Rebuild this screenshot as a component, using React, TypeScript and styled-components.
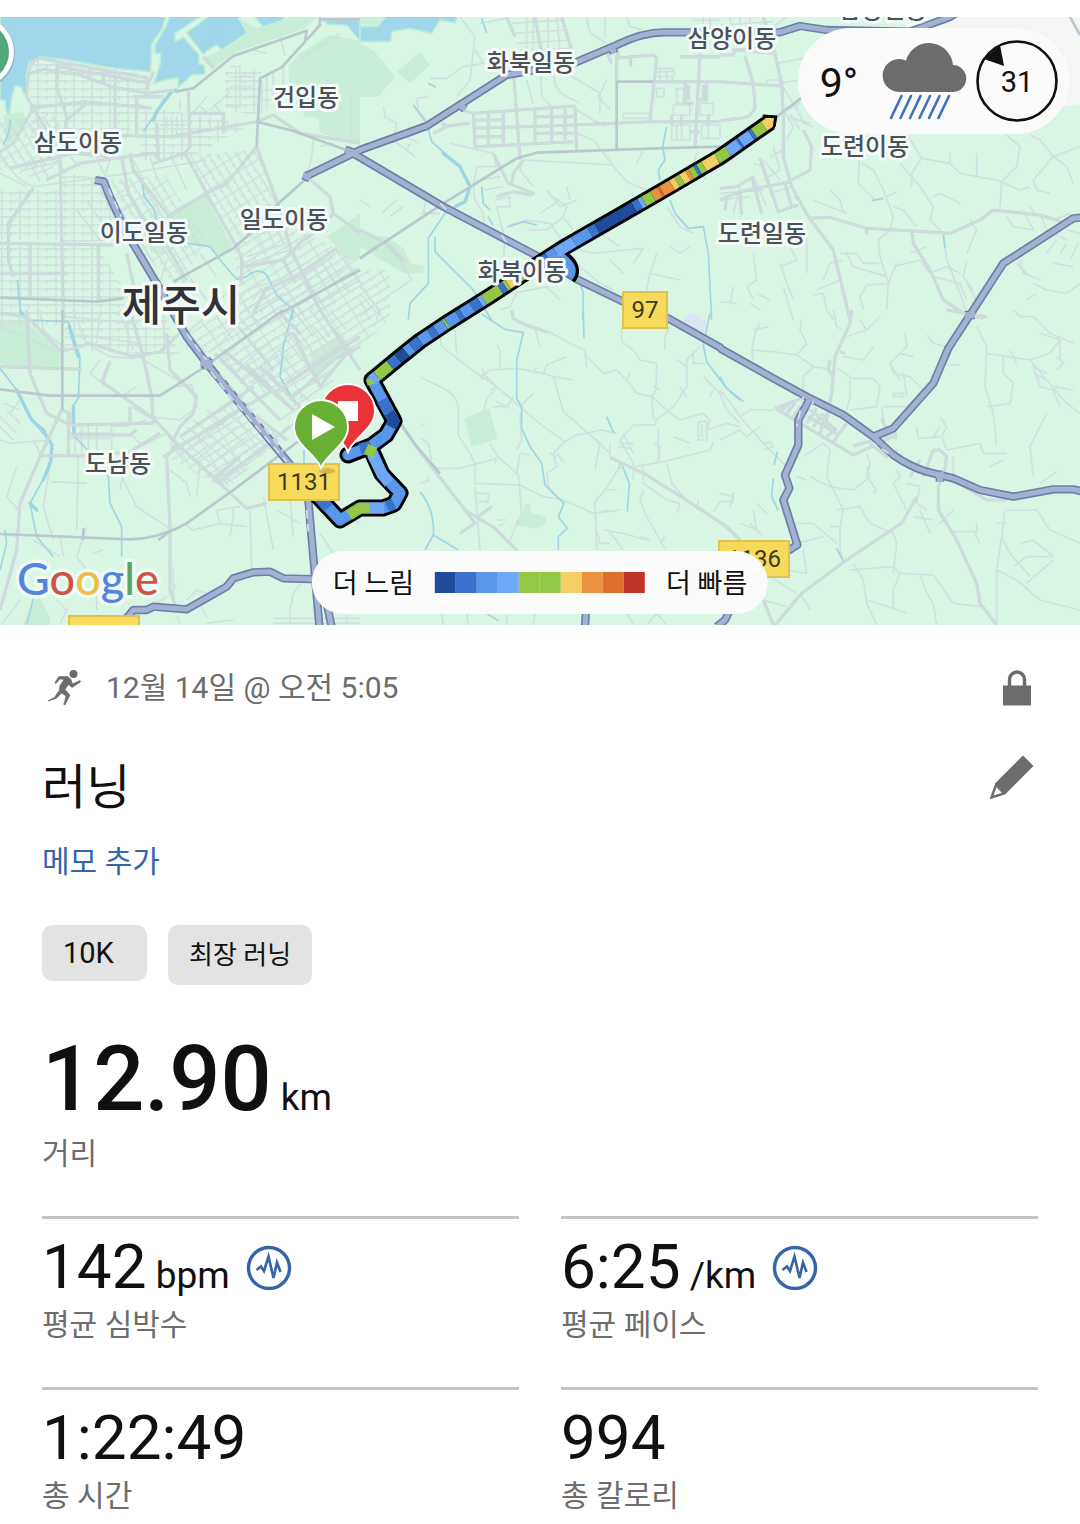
import React from "react";
import styled, { createGlobalStyle } from "styled-components";

const GlobalStyle = createGlobalStyle`
  *, *::before, *::after { box-sizing: border-box; }
  body {
    margin: 0;
    background: #ffffff;
    color: #101010;
    font-family: Roboto, "Noto Sans CJK KR", sans-serif;
  }
`;

/* ---------- map data ---------- */

type Tile = { x: number; y: number; paths: string[] };

// Each tile is drawn on a 3x grid with its own origin.
const waters: Tile[] = [
  {
    x: 0,
    y: 0,
    paths: [
      "M0 40H500L485 90L455 130L452 215L345 205L190 178L120 170L88 185L78 225L82 282L70 280L66 262L45 258L35 290L28 350L18 330L15 300H0Z",
      "M512 40L500 75L466 135L466 160L483 160L480 195L462 250L500 238L535 235L535 262L575 225L615 222L612 195L595 192L597 165L550 112L525 125L525 100L615 40Z",
      "M640 40L560 98L608 160L650 135L672 155L740 98L712 40Z",
      "M755 40H870L842 62L790 80Z",
      "M975 62L1020 56L1080 56V122L1040 75L980 72Z",
    ],
  },
  { x: 360, y: 0, paths: ["M0 80L55 78L80 40H295L285 68L240 60L215 100L150 85L95 95L92 124H0Z"] },
];

const parks: Tile[] = [
  {
    x: 0,
    y: 0,
    paths: [
      "M712 52L770 85L842 62L870 52H950L910 88L710 155L640 205L612 175L660 150L740 98Z",
      "M1080 122L990 105L900 160L865 200L870 260L915 350L955 355L960 400L1080 432Z",
      "M505 645L615 582L700 745L655 765L628 738L570 728L550 690Z",
      "M980 710L1080 640V775L1045 782L1010 740Z",
      "M445 730L500 738L492 765L452 755Z",
      "M10 345L70 335L75 360L20 440Z",
    ],
  },
  { x: 360, y: 0, paths: ["M0 130L40 150L105 230L55 290H0Z", "M110 215L180 155L210 195L150 250Z", "M0 700L80 710L130 745L150 790L195 800L185 820L130 820L0 740Z", "M0 52H80L50 80L0 70Z"] },
  { x: 0, y: 310, paths: ["M0 35H80L185 130V170H30L0 160Z", "M930 130L1010 80L1045 120L960 180L945 220Z", "M120 865L150 920V945H70L100 870Z"] },
  { x: 420, y: 310, paths: ["M133 325L208 295L232 388L155 410Z", "M312 585L330 580L335 610L378 620V640L350 656L285 645L290 630L308 622Z"] },
];

const rivers: Tile[] = [
  {
    x: 0,
    y: 0,
    paths: ["M530 265L490 300L465 345L430 395", "M428 550L432 590L460 625L470 660", "M565 730L630 740L665 785L710 838L740 830Q775 800 800 825L830 885L880 930L875 960", "M52 840L62 940L80 960", "M32 360L25 400L10 435", "M670 55L610 160"],
  },
  { x: 360, y: 0, paths: ["M160 315L200 370L215 425L300 500L330 555L320 600L255 640L205 715L205 850L150 910L145 960", "M225 710L225 755L290 820L340 870L395 960", "M365 55L380 100", "M205 250L228 262", "M365 560L370 610L390 630M385 650L398 675M445 680L490 665L530 675", "M920 380L908 440L915 480L895 510L900 540M930 600L945 640L985 685L1030 680L1045 760L1055 960", "M640 780L670 880L668 960"] },
  { x: 720, y: 0, paths: ["M455 602L490 595", "M670 705L675 745"] },
  {
    x: 0,
    y: 310,
    paths: ["M60 0L85 30L205 35L240 140L235 265L218 290L220 375L262 420L325 500L330 580L365 650L365 740", "M0 175L50 240L95 330L155 400L150 470L90 580L110 680L160 740", "M15 660L20 700L0 780", "M100 865L80 945", "M878 0L850 110L840 200L885 280", "M912 420V460"],
  },
  { x: 420, y: 310, paths: ["M185 12L255 58L310 68L290 150L290 265L305 290L305 355L330 410L365 460L375 525L432 580L415 620L442 655L415 680V720", "M0 545Q45 600 40 675L15 720M40 675L115 720", "M490 0L492 85", "M870 10L850 105L860 155L920 235L960 270", "M608 470L628 520L622 605", "M560 320L582 370", "M200 910L235 932"] },
  { x: 720, y: 310, paths: ["M0 200L20 235L70 275", "M172 425L162 465M160 505L155 560L175 602", "M350 715L370 755"] },
];

const wideRivers: Tile[] = [
  { x: 0, y: 0, paths: ["M512 278L470 335L460 360"] },
  { x: 360, y: 0, paths: ["M250 460L300 500L330 560L315 605L285 620"] },
  { x: 0, y: 310, paths: ["M50 240L95 330L130 360L156 405L152 455L130 510M208 50L235 140M220 290L222 370M90 580L110 600"] },
];

const lanes: Tile[] = [
  {
    x: 0,
    y: 0,
    paths: [
      "M0 470L60 540L100 560M0 520L80 560M20 690L90 570M100 560L390 520L620 480",
      "M75 510L150 490M85 530L160 500M120 490L150 540M90 490L120 545M60 520L100 480",
      "M160 470L200 520M210 470L240 500M290 470L310 520M330 480L310 540",
      "M400 480L430 540M450 470L470 530M510 460L560 570M540 300V330M620 290L570 350",
      "M630 330L690 275M600 320L630 345M640 310L670 345V400M690 200H720V320H680M690 230H760M690 260H760M680 290H770",
      "M785 240V340M800 220V330M820 210V300M850 200V280M780 270H860M780 300H850",
      "M760 150L800 160M840 110L855 165M900 180L960 140L1020 100",
      "M1055 290V430M1000 430L960 440M940 420L935 470L920 530",
      "M500 350V400M515 350V405M530 350V405M480 375H560M600 350V390M630 350V385",
      "M500 780L480 850M560 750L530 690L500 640M600 760L650 830M560 820L620 900M700 860L660 900M780 870L760 900",
      "M690 930L740 870L860 830M640 960L720 900M760 930L850 880",
      "M900 830L960 930M940 800L1000 900M985 780L1050 880M1010 750L1080 850M860 900L900 960M1000 770L880 850M1050 800L920 890M1080 840L960 910",
      "M740 770L860 730M750 790L870 750M760 680L800 760M790 660L830 750M820 660L850 730",
      "M430 580L470 640L510 700M300 560L340 640M260 600L320 690M230 630L300 720M340 600L390 580M350 640L410 610",
    ],
  },
  {
    x: 360,
    y: 0,
    paths: [
      "M300 51L345 110L330 240L290 290M210 235L260 235L310 200L370 190L345 150M360 70L440 55M460 100L620 90M470 130L630 120M500 51V150M520 51V160M565 51V150M590 51L600 150M455 70L610 60M480 150L640 145",
      "M540 180L545 290L575 320M500 240L520 310M585 200Q570 260 620 290L660 310M620 220L720 280L720 340M740 240L715 290L750 330M680 51L690 100L740 130M735 51V110M800 51L810 80L850 90",
      "M205 290L170 295L175 335L200 360M70 320L75 350L110 370L100 420L165 470M110 400L180 430M150 430L140 450M65 640L110 600M90 650L130 620M180 640L240 640M0 600L30 620M200 590L190 640",
      "M270 430L400 460L410 500L350 500L340 560M360 540L420 530M370 570L430 560M340 560L345 600L370 640L375 700M405 600L450 590L450 620L410 620L435 720L430 780",
      "M490 480L680 490L760 495M490 480L480 510L520 560M540 640L600 600M560 570L600 620L650 600M620 560L630 600M580 590L620 620M620 620L610 650L640 690M500 690L560 690L610 650M440 680L500 660L570 670L620 740L700 760L850 745",
      "M650 330L700 360L740 380M650 400L700 420L770 510L800 545L860 570M850 450L830 490M720 700L780 740M850 745L820 790M750 780L790 820M890 760L870 820L960 840M870 820L860 870M990 740L960 760L930 740M920 620L960 680L1000 700",
      "M0 860L60 930L50 960M0 880L50 940M0 900L30 960M75 730L100 760L120 780L155 840L50 910L0 950M120 780L150 780",
      "M600 900L560 860L460 880M640 780L660 800L720 850L760 870M470 880L450 920L420 930",
      "M890 205H940Q950 240 920 245H885M885 215H940M885 230H940M900 205V245M920 205V245M890 265H912V290H890ZM950 265H970V310H950Z",
      "M940 315H990V345H940ZM935 375H990V420H935ZM950 375V420M965 375V420M1020 310H1060V345H1020ZM1025 375H1080V415H1025ZM1045 375V415M790 340H870V355H790Z",
      "M1010 460L1000 500L1040 540M1030 51V90M1050 51V90M1000 60H1080",
    ],
  },
  {
    x: 720,
    y: 0,
    paths: [
      "M30 51L40 130M60 51L65 120M90 51V100M0 75L160 65M0 150L160 140M160 80L200 51",
      "M170 190L250 175M175 250L240 240M140 250V240H180M180 245L230 330M180 340L240 310M200 350L270 370M190 330L220 380L200 420M210 340L240 390M230 320L250 370L280 380",
      "M420 400L415 550L465 600M425 490L460 510L490 570L520 650L510 690L475 720L480 770L505 850L500 930M500 590L530 575M520 620L550 630L590 680M540 490L600 560L640 620L630 660L670 700L680 780L720 880L740 940",
      "M575 560V520L605 475L560 400M605 475L690 490V460M690 490L720 520L770 530V460M770 530L830 540L900 570L930 560M845 545L840 620M640 590L660 580L720 610M845 545L890 500L900 440L860 405M1080 440L1000 470L940 540L950 570L990 580M1000 470L960 420L930 405M1000 470L1040 500L1060 550",
      "M860 650L880 680L940 690L910 630M950 650L930 620M960 640L980 690L1040 720M1000 660L1050 640M1010 720L980 760M1040 690L1080 700M1040 730L1020 760M1075 730L1050 780",
      "M215 560L150 580M220 590L240 600M280 600L330 620L380 640M330 570L360 600L370 640M360 760L410 760L430 790L480 790M380 760L400 800L500 830M290 870L360 840M310 840L330 790L370 780M280 885L310 880L320 930L340 960",
      "M100 760L110 840L80 860L100 900M110 880L150 900M40 860L30 910M90 910L120 930M180 790L200 850L220 900M210 740L230 780L180 800M0 905L50 910M190 860L220 960M260 700L260 820",
      "M520 800L560 790L600 780L630 820M505 850L530 790M630 820L680 800M640 830L720 850L740 900M680 800L720 820M740 760L770 690L750 660M740 780L730 830L760 870M440 855L420 890L430 930M505 850L440 855M570 760L620 740M740 850L770 900",
      "M900 780L910 820L960 840M940 850L980 870M950 880L920 900M980 870L1040 880L1080 850M890 790L930 830M1000 790L1060 800",
      "M0 580L130 570M0 600L90 590M130 480L180 540M100 530L140 620M60 560L40 640M150 470L190 450M100 490L130 500M130 540L180 510L160 440",
    ],
  },
  {
    x: 0,
    y: 310,
    paths: [
      "M185 130L0 50M120 0L130 60L200 120M220 0L260 100M300 0L290 100M360 0L400 120M190 20L400 40M200 70L420 100M260 100L330 140L400 145",
      "M20 300L60 340M0 320L50 370M0 350L40 390M10 280L60 300M0 390L30 400L150 390M100 390L125 440M60 270L30 310",
      "M270 190L300 150M310 220L330 150M270 190L320 230M360 260L410 230M450 320L540 330L590 290L575 225L520 230",
      "M210 370L340 370M210 385L330 385M225 340V430M245 345V430M265 345V430M290 345V430M335 345V420M340 350L420 340M370 350L440 330M400 420L500 370M390 370L420 400",
      "M150 440L145 500L130 590L160 690M155 515L260 520M235 440L230 660M50 470L20 560L55 600M360 490L410 590L470 630L510 655M370 490L360 540M510 480L560 520L570 560M600 460L590 560M510 400L550 450",
      "M260 650L230 740L260 780M180 680L190 740M0 670L50 680M100 690L180 740M280 730L310 720M650 600L660 640L580 660L550 640M720 590L650 600M750 600L755 780M700 590V620L690 680M660 640L740 650M790 560L820 720M830 600L900 640M870 560L880 680",
      "M400 130L480 180L550 220M640 120L700 60M660 150L740 80L790 50M700 190L830 80M720 220L850 110M740 240L870 130M760 190L800 260M820 140L870 200M790 160L840 230M830 110L890 190M860 90L940 190M900 70L960 160M940 50L1010 130M980 30L1060 130",
      "M560 120L570 60L640 0M560 60L620 130M600 30L640 80M650 20L700 90M700 0L760 70M740 0L790 50M860 80L880 70L920 120M560 80L680 0M880 0L940 80M930 0L990 80M990 0L1040 60M870 260L990 190M880 290L1000 210M890 240L960 300",
      "M540 380L700 520M560 350L720 490M580 330L740 470M620 300L780 440M660 290L800 410M500 370L520 400M560 420L680 330M590 450L710 350M610 480L740 380M640 500L770 400M660 520L800 420M690 550L830 440",
      "M840 330L900 290M850 360L900 330M1000 600L1080 640M960 670L1020 760M250 850L310 830M290 850V900M470 880L500 860M560 870L590 840L620 850M510 860L530 820M0 950L60 870M820 925H1080M870 900L880 850L920 800L930 790M870 890V945M960 900V945M1040 900V945M820 940H1080",
      "M170 870L200 900L180 940M520 770V900M530 920L540 940M600 880L620 920M620 940L700 930",
    ],
  },
  {
    x: 420,
    y: 310,
    paths: [
      "M60 60L65 110L170 190L230 230L300 290L370 350L435 395L400 430L410 470L380 490L385 530L410 560M105 60L110 130M230 105L240 120V180M180 200L210 180L290 175L370 190L380 165L440 140M370 190L400 200L460 210M400 200L430 305L505 370L570 430M300 290L340 250M210 240L230 230M190 310L200 265L225 240",
      "M218 290H260L280 260M230 275L270 295M170 185L190 210M185 175L205 215M200 200L225 225M340 190L350 170M345 55L360 110M385 65L450 100L495 120L500 170M495 135L550 190L590 180L620 210L650 250L695 260L740 300L780 330L850 310L870 330L860 360L920 340L960 350M710 160L708 240L695 260L700 320L710 330L705 345L640 345L600 390M710 330L760 290L800 230V150L840 110M710 160L660 150L640 120L605 95V50M735 120V80L750 50M770 150L800 170M780 230L800 260M720 240L700 230M620 210L630 190",
      "M0 200L80 240Q115 260 115 300V375L150 430L165 460V520L300 525L370 560L430 570L520 610L600 600M45 475L120 475L230 445M208 400L235 440L295 495L305 610L270 690M230 440L225 460M165 530L180 720M170 550H205V575H175M230 630H260M235 650L250 640M290 490L300 430L330 435M290 420L305 390L300 310",
      "M435 395L470 375L545 360L590 370M505 370L540 400L525 480M600 470L555 540L525 575L530 720M560 540H590M525 610L565 600M550 660L610 670L680 690M565 660L610 720M600 390L640 460V510M610 370L640 430M600 400H640M595 410L630 415M570 400V440M645 470L730 455L870 420L880 395M740 460L755 520L800 570M700 400L720 410L715 460M715 355V460M760 380L810 400M835 335H860V390H835ZM845 345V380",
      "M670 470V520L740 570L780 580M670 540L660 570L680 620L735 715M720 700L735 680M690 690L660 680M780 580L770 610M830 600L835 570M880 605L900 575L940 575V545M530 660L540 700H570M820 120V160H855M850 200L900 250L920 300L960 340M880 240L870 260M390 430L410 440M410 430L430 455M0 350L15 340M0 520L30 510M30 510L20 500M0 385L25 400L35 450",
      "M65 910L70 945M140 910L145 945M260 910V945M345 910L340 945M620 910L640 945M680 945L710 910L740 945",
    ],
  },
  {
    x: 720,
    y: 310,
    paths: [
      "M120 40L105 70L95 120L100 150M100 60L145 50M95 120L160 125L230 135L280 170L320 175M245 30L240 60L260 100L230 135M250 240L250 200L280 170M380 80L440 60L480 20M440 60L420 30M340 0L350 50L370 60M460 110L430 150L370 140M350 175L390 200V260L380 300M390 205H460L480 230L470 290L390 300",
      "M555 70L560 110L510 160L520 190L570 200L610 240L560 290L490 290M540 130L580 140M510 160L540 210M550 190L560 260M520 260H550V250H520ZM485 290L490 330L500 360M620 75L640 100L680 110",
      "M770 50L800 110L795 230L820 310L830 405M800 130L930 150L980 210L1040 280L1080 310M850 140V190L880 220L870 280L800 290M680 165H720M890 160L870 120M930 150L990 130L1020 90L960 70M980 210L940 190M1000 230L1060 240M1010 180L1030 160L1010 140M1020 90V150M980 190L940 170L960 230L1000 240L1020 290M940 500L930 410L980 310M960 520L1010 485M880 0L900 20L940 20L990 70L1060 100",
      "M590 350L595 385L660 380M660 320L680 350L665 380L680 420L780 400L790 430L860 430M700 440V490L690 500M660 350L640 380M810 470L850 450M560 520L600 530L590 580L620 600M530 480L540 500L520 520L560 600M700 600L660 640M580 620L640 630M600 600L630 670",
      "M0 240L40 290L60 320L130 400L200 470M60 320L90 300L160 300M0 390L60 360L80 380L120 350M130 400L150 395L160 410L130 420M250 440L310 400L330 420L320 500L350 560L370 600L360 650L330 650M270 500L330 530L400 540L450 500L440 470M230 500L260 510M440 430L450 460L440 500L470 540L460 550",
      "M350 600L420 590L450 640L520 670L530 700L520 790M360 650V720L370 750M220 640L280 640L350 700M230 700L310 680M250 720L260 790L200 780M400 760L430 810L440 880L470 945M390 780L520 770L540 790L640 795L700 880L780 890M540 790L520 840V895L440 870M520 895L560 910M600 795L620 850L640 880L650 945",
      "M860 600L950 600L990 660L1080 700M855 600L845 680L830 780L830 945M830 780L890 810L960 870L1080 900M845 680L870 730L930 800M880 770L920 740L1000 740M860 640L830 640M900 700L940 690L1000 740M920 820L1000 750M700 665H770V640M780 700L760 660",
      "M0 550L40 560M30 590L40 550M60 640L110 660L100 600M110 580L140 610M90 640L130 680M130 870L200 890M240 850L270 900M150 800L230 850",
    ],
  },
];

const streets: Tile[] = [
  {
    x: 0,
    y: 0,
    paths: [
      "M100 325L80 290L85 225Q88 182 120 175L445 235",
      "M92 220L130 208L240 225L340 262L440 280L525 270",
      "M175 185L170 260L200 350L190 470M345 205V480M210 195V220M310 205V250M270 200L265 235M180 200L450 250",
      "M90 325L255 305L455 325M410 290V400M400 290H490M300 405L510 410L770 365M460 215L435 280",
      "M100 325L145 400M100 325L40 430L0 455M260 310L200 360",
      "M565 275L570 440L555 460L460 490M570 340H670V400M470 370L475 470",
      "M30 505L220 460L330 470M140 540L240 490L460 460L480 480",
      "M180 470L190 960M100 565L25 670V780L40 830",
      "M555 460L620 580L725 770V850M770 440L680 550L620 580L500 650M770 440L835 615L870 740L960 930",
      "M365 470L385 580L440 680L490 720L560 840M390 460L400 510L500 640",
      "M0 730L340 735M0 820H205M90 730V900M295 735V900M380 760L410 900",
      "M920 530L990 590L1000 640L1080 700M1000 640L960 690M730 800L850 780L910 720L970 680M850 780L880 840",
      "M800 870L900 820L1010 745M760 940L800 860",
      "M770 365L820 345L900 400L1080 430",
      "M610 170L640 205",
    ],
  },
  {
    x: 360,
    y: 0,
    paths: [
      "M440 51L465 110M525 51L545 160M605 51L635 150M460 210L480 480M340 340L645 318M340 385L640 375L870 365L1080 365M345 440L640 425M340 340L345 440M385 335V440M430 335V430M525 325V430M575 320V425M615 320V420M645 318L650 455",
      "M340 360H430M340 410H430M530 350H640M530 400H640M310 330L340 340M245 370L260 380L220 400M260 378L330 370",
      "M770 245V165M770 175L880 165L890 175L870 365M812 165V200M770 130L775 170M740 160L755 190M960 170H1080M880 245H1080M1020 160L1005 440",
      "M975 250V310H1000M985 255V300M1040 250V300H1015M1030 255V300M935 345V375M965 345V375M1045 345V375M990 395H1020",
      "M400 460L445 550L520 580L510 585L460 575L410 590M490 480L460 520L455 550",
      "M0 690L70 725L0 775M75 725L130 780",
    ],
  },
  {
    x: 720,
    y: 0,
    paths: [
      "M130 51L160 140L185 250L190 350V470L215 560L265 650L340 750L390 960",
      "M75 170L100 250L105 320Q100 350 60 355L0 362M0 245L180 258M215 540L270 510L275 440L250 390",
      "M265 655L330 652L440 685L690 700L780 660L820 630L960 645L1040 670M440 685V705M575 690L580 730L630 810L670 900L740 945L790 955",
      "M0 600L60 575L210 545M0 565L50 560L100 530M95 530L125 640M120 475L175 635L235 615M60 580L65 645M195 550L215 620M20 590L15 630",
      "M0 165H40L45 150L160 160",
    ],
  },
  {
    x: 0,
    y: 310,
    paths: [
      "M80 0L90 190L140 310L210 345L460 340M185 300L120 440L60 580L50 720L0 900M120 437H260L390 425L480 370",
      "M0 10L80 20L185 125L270 100L400 140L480 125L550 60M390 0L430 140L455 260L460 340M0 170L245 178M205 310V440M165 340L185 300L210 310V345M205 375H390L410 360",
      "M330 155L305 215L460 325L530 400L500 440L510 650L510 840L530 900M390 290V345M400 290L450 320M530 400L670 530L740 595L800 580",
      "M540 380L760 230M490 440L820 240M650 520L870 350M500 70L510 180L590 260L580 310L540 350L520 390M640 510L720 440",
      "M645 130L840 330M670 120L880 300M870 270L1000 150L1080 110M780 170L900 290M850 75L880 70L960 230M770 320L860 390M690 20L820 180M960 230L1040 130M740 165L870 290",
      "M860 220L1080 80M960 0L1080 180M840 10L900 70M820 250L1010 120",
    ],
  },
  {
    x: 420,
    y: 310,
    paths: [
      "M275 0L280 25L310 42L385 68M0 425L135 600L165 640L120 670M135 600L225 655L290 720M175 620L215 590M570 442L680 495L830 590L920 650L960 690M600 455V475",
      "M0 425L-60 340",
    ],
  },
  {
    x: 720,
    y: 310,
    paths: [
      "M395 0L390 40L345 140L335 250L320 330L310 350M330 150L325 180L340 200M360 125L375 130",
      "M165 295L400 435L530 375M165 295L245 265M185 300L210 280M200 310L225 280M220 320L240 290M260 340L290 295M280 350L310 310M265 320L350 370M300 370L320 310M320 380L345 360M340 395L380 340M270 300L350 360",
      "M400 408L530 370M485 325L500 360L530 385M450 400L500 440L530 420M570 500L600 450M640 420H660L680 440L670 500L655 530V600L710 690L770 820L780 880L830 945M640 420L610 500",
      "M590 560L545 640L380 750L245 850L165 945M700 510L800 570L860 570M0 635L50 680M130 870L160 945M680 0L800 20",
    ],
  },
];

const arterials: Tile[] = [
  {
    x: 0,
    y: 0,
    paths: ["M525 275L580 265L700 168L920 92L915 125L845 202L780 235L770 440M920 120L960 75V51M960 58H1080", "M770 365L880 393L1045 452", "M920 535L830 615L740 710L700 745L520 845", "M0 893L290 905L370 895"],
  },
  { x: 360, y: 0, paths: ["M0 775L250 610L470 475L530 458L890 445L1080 440M770 450V245H880"] },
  { x: 720, y: 0, paths: ["M170 350L250 290", "M1050 51L1080 105"] },
  { x: 0, y: 310, paths: ["M0 238L150 257H480L600 180L850 0M187 0V300M0 672L390 688Q480 685 560 640L700 540L900 390L1080 260", "M1080 -120L840 10", "M250 655V690M475 690L515 660"] },
  { x: 260, y: 340, paths: ["M415 240L470 320L540 400"] },
];

const motorways: Tile[] = [
  { x: 0, y: 0, paths: ["M285 540L312 545L325 580L375 690L470 850L560 1010L620 1090L900 1430L925 1500L960 1900"] },
  { x: 0, y: 0, paths: ["M915 530L1080 450L1280 378L1520 225L1720 190L1850 135Q1930 95 2000 97L2340 97L2400 78L2480 90L2730 95L2850 51L2930 0"] },
  { x: 0, y: 0, paths: ["M1040 450L1085 475L1330 620L1625 775L1735 840L1870 905L2005 955L2165 1045"] },
  { x: 720, y: 310, paths: ["M0 115L160 205L270 265L370 315L460 380L520 435Q570 470 620 485L700 505L780 540L880 560L1000 538H1060L1090 545", "M460 380L520 355L640 220L685 115L750 15L850 -140L1060 -275L1090 -278", "M270 265L235 330V405L195 495L208 535L190 570L232 705L200 725"] },
  { x: 0, y: 310, paths: ["M350 960L400 900H440L460 890L560 898L680 830L700 805L760 787L810 785L850 805L960 808", "M980 880L995 950"] },
  { x: 420, y: 310, paths: ["M498 900L495 950", "M890 950L915 930L930 900"] },
];

const junctions: Tile[] = [
  { x: 0, y: 0, paths: ["M910 525L930 535M1035 450L1060 458"] },
  { x: 0, y: 310, paths: ["M602 160H638M620 142V178"] },
  { x: 720, y: 310, paths: ["M650 505L672 490M660 490V515M735 15H765"] },
  { x: 360, y: 0, paths: ["M300 315L315 328M755 140L762 160"] },
];

const dashes: Tile[] = [
  { x: 0, y: 0, paths: ["M325 565L365 650M560 1000L620 1080", "M300 570L345 660"] },
  { x: 0, y: 310, paths: ["M660 190L850 425M632 185L690 260L860 455", "M920 600L925 665"] },
  { x: 360, y: 0, paths: ["M240 610L262 632M425 705L440 728"] },
  { x: 720, y: 310, paths: ["M250 260L230 350M280 275L250 335M450 392L520 440"] },
];

const blocks = [
  { points: "0,190 62,190 62,240 0,240", fill: "url(#grid-straight)" },
  { points: "0,243 98,245 130,300 130,325 0,325", fill: "url(#grid-straight)" },
  { points: "62,170 100,180 130,240 62,243", fill: "url(#grid-straight)" },
  { points: "30,60 150,75 150,90 115,160 30,150", fill: "url(#grid-straight)" },
  { points: "190,155 256,150 280,205 240,250 205,195", fill: "url(#grid-tilt)" },
  { points: "110,180 165,175 205,240 180,290 130,240", fill: "url(#grid-tilt)" },
  { points: "235,250 275,215 310,235 360,262 330,310 240,330", fill: "url(#grid-slope)" },
  { points: "195,340 300,265 390,270 390,320 300,400 240,380", fill: "url(#grid-slope)" },
  { points: "165,455 240,390 280,440 225,490", fill: "url(#grid-slope)" },
  { points: "65,310 165,315 180,355 65,350", fill: "url(#grid-straight)" },
  { points: "0,120 60,115 60,165 0,170", fill: "url(#grid-tilt)" },
  { points: "140,105 250,125 185,160 140,160", fill: "url(#grid-straight)" },
  { points: "225,68 262,70 255,115 225,110", fill: "url(#grid-straight)" },
];

type Point = [number, number];
type Stretch = { until: number; color: string };

const pace = {
  navy: "#1f4b99",
  blue: "#3a72cb",
  azure: "#5897ea",
  sky: "#6fa8f7",
  green: "#92c846",
  yellow: "#f3ce65",
  orange: "#ea9142",
  rust: "#db702d",
  red: "#c0332a",
};

const mainRoute: Point[] = [
  [770, 122], [720, 157], [662, 191], [617, 217], [563, 248], [490, 296], [447, 323], [420, 341], [400, 357], [372, 380],
];

const mainPace: Stretch[] = [
  { until: 764, color: pace.yellow }, { until: 754, color: pace.green }, { until: 751, color: pace.blue },
  { until: 741, color: pace.sky }, { until: 739, color: pace.blue }, { until: 728, color: pace.sky },
  { until: 717, color: pace.green }, { until: 704, color: pace.yellow }, { until: 699, color: pace.green },
  { until: 696, color: pace.blue }, { until: 691, color: pace.green }, { until: 688, color: pace.orange },
  { until: 682, color: pace.yellow }, { until: 677, color: pace.green }, { until: 672, color: pace.yellow },
  { until: 662, color: pace.orange }, { until: 660, color: pace.rust }, { until: 653, color: pace.orange },
  { until: 644, color: pace.green }, { until: 640, color: pace.sky }, { until: 634, color: pace.blue },
  { until: 597, color: pace.navy }, { until: 590, color: pace.blue }, { until: 574, color: pace.azure },
  { until: 556, color: pace.sky }, { until: 548, color: pace.azure }, { until: 541, color: pace.blue },
  { until: 532, color: pace.sky }, { until: 520, color: pace.green }, { until: 508, color: pace.yellow },
  { until: 505, color: pace.green }, { until: 500, color: pace.blue }, { until: 484, color: pace.green },
  { until: 480, color: pace.sky }, { until: 472, color: pace.blue }, { until: 462, color: pace.azure },
  { until: 458, color: pace.blue }, { until: 447, color: pace.azure }, { until: 445, color: pace.green },
  { until: 436, color: pace.azure }, { until: 430, color: pace.blue }, { until: 420, color: pace.azure },
  { until: 412, color: pace.blue }, { until: 406, color: pace.azure }, { until: 398, color: pace.navy },
  { until: 390, color: pace.blue }, { until: 377, color: pace.green }, { until: 372, color: pace.sky },
];

const loops: { color: string; d: string }[] = [
  { color: pace.green, d: "M371 378L373 384" },
  { color: pace.blue, d: "M382 400L389 413" },
  { color: pace.navy, d: "M389 413L394 421L391 427" },
  { color: pace.blue, d: "M371 446L360 449" },
  { color: pace.sky, d: "M372 454L382 474L389 483" },
  { color: pace.blue, d: "M394 504L387 507" },
  { color: pace.sky, d: "M384 508L370 508" },
  { color: pace.green, d: "M370 508L360 508L349 515" },
  { color: pace.blue, d: "M328 508L316 494" },
  { color: pace.green, d: "M366 449L375 453" },
];

const loopLine =
  "M372 380L394 421L386 435L371 446L348 455M370 447L382 474L400 493L394 504L383 508L360 508L340 520L312 490";

const spurLine = "M557 254L566 262Q574 270 568 277";

const toPath = (points: Point[]) => "M" + points.map((p) => p.join(" ")).join("L");

function pointAt(points: Point[], x: number): Point {
  for (let i = 1; i < points.length; i++) {
    const [ax, ay] = points[i - 1];
    const [bx, by] = points[i];
    if (x >= bx) return [x, ay + ((by - ay) * (x - ax)) / (bx - ax)];
  }
  return points[points.length - 1];
}

const places = [
  { name: "화북일동", x: 531, y: 71 },
  { name: "삼양이동", x: 732, y: 47 },
  { name: "삼양일동", x: 883, y: 18 },
  { name: "건입동", x: 306, y: 106 },
  { name: "삼도이동", x: 78, y: 151 },
  { name: "도련이동", x: 865, y: 155 },
  { name: "일도이동", x: 284, y: 228 },
  { name: "이도일동", x: 144, y: 241 },
  { name: "도련일동", x: 762, y: 242 },
  { name: "화북이동", x: 522, y: 280 },
  { name: "도남동", x: 118, y: 472 },
];

const roadNumbers = [
  { label: "97", x: 645, y: 310, w: 44 },
  { label: "1131", x: 304, y: 482, w: 70 },
  { label: "1136", x: 754, y: 559, w: 70 },
  { label: "", x: 104, y: 634, w: 70 },
];

/* ---------- map drawing ---------- */

const MapArea = styled.section`
  position: relative;
  margin-top: 17px;
`;

const MapCanvas = styled.svg`
  display: block;
  width: 100%;
  height: auto;
  background: #d9f6e4;
`;

const PlaceName = styled.text`
  font: 500 24px "Noto Sans CJK KR", sans-serif;
  fill: #4c5057;
  stroke: #f4faf8;
  stroke-width: 6px;
  stroke-linejoin: round;
  paint-order: stroke;
  text-anchor: middle;
`;

const CityName = styled(PlaceName)`
  font-size: 43px;
  fill: #303236;
  stroke-width: 7px;
`;

const RoadNumber = styled.text`
  font: 400 24px Roboto, sans-serif;
  fill: #3a3a1c;
  text-anchor: middle;
`;

const MapBrand = styled.text`
  font: 500 45px Lato, sans-serif;
  stroke: #eefaf4;
  stroke-width: 7px;
  stroke-linejoin: round;
  paint-order: stroke;
`;

function Layer({ tiles, ...rest }: { tiles: Tile[] } & React.SVGProps<SVGGElement>) {
  return (
    <g fill="none" strokeLinejoin="round" {...rest}>
      {tiles.map((tile, i) => (
        <g key={i} transform={`translate(${tile.x} ${tile.y}) scale(${1 / 3})`}>
          {tile.paths.map((d) => (
            <path key={d} d={d} />
          ))}
        </g>
      ))}
    </g>
  );
}

function Pin({ x, y, color, children }: { x: number; y: number; color: string; children: React.ReactNode }) {
  return (
    <g transform={`translate(${x} ${y})`}>
      <path d="M0 41C-5 27-27 18-27 0A27 27 0 0 1 27 0C27 18 5 27 0 41Z" fill={color} stroke="#fff" strokeWidth="2" />
      {children}
    </g>
  );
}

function RouteMap() {
  let from = mainRoute[0][0];
  return (
    <MapCanvas viewBox="0 17 1080 608" role="img" aria-label="러닝 경로 지도">
      <defs>
        <pattern id="grid-straight" width="18" height="8" patternUnits="userSpaceOnUse">
          <path d="M0 1H18M2 0V8M11 0V4" stroke="#cfdde0" strokeWidth="1.4" fill="none" />
        </pattern>
        <pattern id="grid-tilt" width="15" height="8" patternUnits="userSpaceOnUse" patternTransform="rotate(58)">
          <path d="M0 1H15M2 0V8M9 0V4" stroke="#cfdde0" strokeWidth="1.3" fill="none" />
        </pattern>
        <pattern id="grid-slope" width="22" height="8" patternUnits="userSpaceOnUse" patternTransform="rotate(-32)">
          <path d="M0 1H22M2 0V8M13 0V4" stroke="#cfdde0" strokeWidth="1.3" fill="none" />
        </pattern>
      </defs>

      <rect y="17" width="1080" height="608" fill="#d9f6e4" />
      <path d="M902 17H1080V104L1030 112L940 100Z" fill="#f4f5f5" />
      <path d="M690 312L708 322L703 334L682 322Z" fill="#dde5f4" />
      <Layer tiles={waters} fill="#a0d7ea" stroke="#b9ecd8" strokeWidth={5} />
      <Layer tiles={parks} fill="#c9edd6" />
      {blocks.map((block) => (
        <polygon key={block.points} points={block.points} fill={block.fill} />
      ))}
      <Layer tiles={lanes} stroke="#d1dfe0" strokeWidth={5} />
      <Layer tiles={rivers} stroke="#9fd6e4" strokeWidth={5} />
      <Layer tiles={wideRivers} stroke="#9fd6e4" strokeWidth={10} strokeLinecap="round" />
      <Layer tiles={streets} stroke="#c8d4d8" strokeWidth={9} />
      <Layer tiles={streets} stroke="#d1dcdf" strokeWidth={6} />
      <Layer tiles={arterials} stroke="#bcc8cf" strokeWidth={8} />
      <Layer tiles={motorways} stroke="#6b80a9" strokeWidth={25} />
      <Layer tiles={junctions} stroke="#6b80a9" strokeWidth={26} />
      <Layer tiles={motorways} stroke="#a5b1d1" strokeWidth={15} />
      <Layer tiles={junctions} stroke="#a5b1d1" strokeWidth={18} />
      <Layer tiles={dashes} stroke="#d7deea" strokeWidth={5} strokeDasharray="26 16" />

      <g fill="none" stroke="#000" strokeWidth="17" strokeLinejoin="round">
        <path d={spurLine} />
        <path d={loopLine} strokeLinecap="round" />
        <path d={toPath(mainRoute)} />
        <path d="M763 115L777 116L775 127L768 132Z" fill="#000" strokeWidth="1" />
      </g>
      <g fill="none" strokeWidth="11" strokeLinejoin="round">
        <path d={spurLine} stroke={pace.azure} strokeWidth="10" />
        <path d={loopLine} stroke={pace.azure} strokeLinecap="round" />
        {loops.map((part) => (
          <path key={part.d} d={part.d} stroke={part.color} />
        ))}
        {mainPace.map((part) => {
          const start = pointAt(mainRoute, from);
          const end = pointAt(mainRoute, part.until);
          from = part.until;
          return <path key={part.until} d={toPath([start, end])} stroke={part.color} />;
        })}
        <path d="M765 118L774 118L773 126L769 129Z" fill={pace.yellow} />
      </g>

      {roadNumbers.map((road) => (
        <g key={`${road.label}-${road.x}`}>
          <rect
            x={road.x - road.w / 2}
            y={road.y - 18}
            width={road.w}
            height="36"
            fill="#f8da5b"
            stroke="#dcc352"
            strokeWidth="2"
          />
          {road.label && (
            <RoadNumber x={road.x} y={road.y + 8}>
              {road.label}
            </RoadNumber>
          )}
        </g>
      ))}

      {places.map((place) => (
        <PlaceName key={place.name} x={place.x} y={place.y}>
          {place.name}
        </PlaceName>
      ))}
      <CityName x="181" y="321">제주시</CityName>

      <Pin x={348} y={411} color="#e93338">
        <rect x="-10" y="-10" width="20" height="20" fill="#fff" />
      </Pin>
      <ellipse cx="327" cy="471" rx="8" ry="3" fill="#80702c" opacity="0.3" />
      <Pin x={321} y={427} color="#68b034">
        <path d="M-9 -13L14 0L-9 13Z" fill="#fff" />
      </Pin>

      <MapBrand x="17" y="595">
        <tspan fill="#5484e0">G</tspan>
        <tspan fill="#cb5545">o</tspan>
        <tspan fill="#ebbf4c">o</tspan>
        <tspan fill="#5484e0">g</tspan>
        <tspan fill="#5ba565">l</tspan>
        <tspan fill="#cb5545">e</tspan>
      </MapBrand>

      <circle cx="-21" cy="53" r="36" fill="#5d7f86" opacity="0.4" />
      <circle cx="-21" cy="52" r="35" fill="#fff" />
      <circle cx="-21" cy="52" r="30" fill="#4fa77a" />
    </MapCanvas>
  );
}

/* ---------- overlays ---------- */

const WeatherPill = styled.div`
  position: absolute;
  top: 11px;
  right: 11px;
  display: flex;
  align-items: center;
  height: 106px;
  padding: 0 11px 0 22px;
  border-radius: 53px;
  background: #fbfbfb;
`;

const Temperature = styled.span`
  font-size: 41px;
  line-height: 48px;
  margin-right: 23px;
  padding-top: 4px;
`;

const CloudIcon = styled.svg`
  width: 86px;
  height: 80px;
  margin-right: 9px;
`;

const WindDial = styled.svg`
  width: 82px;
  height: 82px;
`;

const WindSpeed = styled.text`
  font: 400 29px Roboto, sans-serif;
  fill: #101010;
  text-anchor: middle;
`;

const LegendPill = styled.div`
  position: absolute;
  bottom: 11px;
  left: 50%;
  transform: translateX(-50%);
  display: flex;
  align-items: center;
  gap: 21px;
  height: 63px;
  padding: 0 21px;
  border-radius: 32px;
  background: #fbfbfb;
  font-size: 27px;
  line-height: 36px;
  white-space: nowrap;
`;

const LegendLabel = styled.span`
  padding-top: 3px;
`;

const Scale = styled.div`
  display: flex;
`;

const Swatch = styled.span<{ $color: string }>`
  width: 21px;
  height: 21px;
  background: ${(p) => p.$color};
`;

const scaleColors = [
  pace.navy, pace.blue, pace.azure, pace.sky, pace.green, pace.green, pace.yellow, pace.orange, pace.rust, pace.red,
];

function Weather() {
  return (
    <WeatherPill>
      <Temperature>9°</Temperature>
      <CloudIcon viewBox="0 0 86 80" aria-hidden="true">
        <path
          d="M18 51A16.500 16.500 0 1 1 25 19.500A24 24 0 0 1 72 24A13.500 13.500 0 1 1 71.500 51Z"
          fill="#6c6c6c"
        />
        <path
          d="M20.500 55L10 77M30 55L19.500 77M39.500 55L29 77M49 55L38.500 77M58.500 55L48 77M68 55L57.500 77"
          stroke="#3d72b8"
          strokeWidth="2.600"
          strokeLinecap="round"
        />
      </CloudIcon>
      <WindDial viewBox="0 0 82 82" role="img" aria-label="풍속 31">
        <circle cx="41" cy="41" r="39.500" fill="none" stroke="#101010" strokeWidth="2.600" />
        <path d="M8 19L24 5L28 26Z" fill="#101010" />
        <WindSpeed x="41" y="52">31</WindSpeed>
      </WindDial>
    </WeatherPill>
  );
}

function Legend() {
  return (
    <LegendPill>
      <LegendLabel>더 느림</LegendLabel>
      <Scale>
        {scaleColors.map((color, i) => (
          <Swatch key={i} $color={color} />
        ))}
      </Scale>
      <LegendLabel>더 빠름</LegendLabel>
    </LegendPill>
  );
}

/* ---------- details ---------- */

const Details = styled.main`
  padding: 36px 42px 10px;
`;

const Row = styled.div`
  display: flex;
  align-items: center;
  justify-content: space-between;
`;

const DateLine = styled.div`
  display: flex;
  align-items: center;
  gap: 22px;
  height: 54px;
  color: #6c6c6c;
  font-size: 30px;
  line-height: 54px;
`;

const RunnerIcon = styled.svg`
  width: 42px;
  height: 42px;
`;

const IconButton = styled.button`
  display: flex;
  padding: 0;
  border: 0;
  background: none;
  color: #6c6c6c;
  cursor: pointer;
`;

const TitleRow = styled(Row)`
  align-items: flex-start;
  margin-top: 38px;
`;

const Title = styled.h1`
  margin: 5px 0 0;
  font-size: 48px;
  font-weight: 400;
  line-height: 60px;
`;

const NoteLink = styled.a`
  display: inline-block;
  margin-top: 26px;
  color: #3564ab;
  font-size: 30px;
  line-height: 36px;
  text-decoration: none;
`;

const Chips = styled.div`
  display: flex;
  align-items: flex-start;
  gap: 21px;
  margin-top: 45px;
`;

const Chip = styled.span<{ $size: number; $line: number }>`
  min-width: 105px;
  padding: 12px 21px;
  border-radius: 10px;
  background: #e3e3e3;
  font-size: ${(p) => p.$size}px;
  line-height: ${(p) => p.$line}px;
`;

const Distance = styled.div`
  margin-top: 50px;
`;

const Value = styled.div`
  display: flex;
  align-items: center;
  font-size: 62px;
  line-height: 64px;
`;

const DistanceValue = styled(Value)`
  font-size: 90px;
  font-weight: 500;
  line-height: 90px;
`;

const Unit = styled.span`
  font-size: 37px;
  font-weight: 400;
  line-height: 37px;
`;

const Caption = styled.div`
  margin-top: 8px;
  color: #6c6c6c;
  font-size: 30px;
  line-height: 36px;
`;

const DistanceCaption = styled(Caption)`
  margin-top: 11px;
`;

const Stats = styled.div`
  display: grid;
  grid-template-columns: repeat(2, minmax(0, 1fr));
  gap: 44px 42px;
  margin-top: 44px;
`;

const Stat = styled.div`
  padding-top: 16px;
  border-top: 3px solid #c4c4c4;
`;

const TrendButton = styled(IconButton)`
  margin-left: 16px;
  color: #3564ab;
`;

function TrendIcon() {
  return (
    <svg width="46" height="46" viewBox="0 0 46 46" fill="none" stroke="currentColor" aria-hidden="true">
      <circle cx="23" cy="24" r="20.500" strokeWidth="3.400" />
      <path d="M10.500 26L15 22.500L18 27L22.500 12.500L27.500 34L31 18.500L34.500 28" strokeWidth="2.600" />
    </svg>
  );
}

const stats = [
  { value: "142", unit: "bpm", caption: "평균 심박수", trend: true },
  { value: "6:25", unit: "/km", caption: "평균 페이스", trend: true },
  { value: "1:22:49", unit: "", caption: "총 시간", trend: false },
  { value: "994", unit: "", caption: "총 칼로리", trend: false },
];

export default function App() {
  return (
    <>
      <GlobalStyle />
      <MapArea>
        <RouteMap />
        <Weather />
        <Legend />
      </MapArea>
      <Details>
        <Row>
          <DateLine>
            <RunnerIcon viewBox="0 0 42 42" aria-hidden="true">
              <circle cx="31.500" cy="7" r="4" fill="currentColor" />
              <path
                d="M17 9.500L26 9.500L29 12.500L30.500 17L38 13.500L38.500 15L30 20.500L26.500 17.500L23 22.500L28 28L23 38L21.800 37.500L24 29L17 24.500L18 18.500L22 12.500L18 12L14 16.500L12.800 15.800Z"
                fill="currentColor"
                stroke="currentColor"
                strokeWidth="0.600"
                strokeLinejoin="round"
              />
              <path d="M16.500 24L19.500 26.500L14.500 31.500L6 34.500V33.500L12.500 30Z" fill="currentColor" />
            </RunnerIcon>
            <time>12월 14일 @ 오전 5:05</time>
          </DateLine>
          <IconButton type="button" aria-label="공개 범위">
            <svg width="42" height="42" viewBox="0 0 42 42" aria-hidden="true">
              <path d="M7 18.500H35V38.500H7Z" fill="currentColor" />
              <path d="M13.500 20V12.500A7.500 7.500 0 0 1 28.500 12.500V20" fill="none" stroke="currentColor" strokeWidth="3.400" />
            </svg>
          </IconButton>
        </Row>

        <TitleRow>
          <Title>러닝</Title>
          <IconButton type="button" aria-label="제목 편집">
            <svg width="48" height="48" viewBox="0 0 48 48" aria-hidden="true">
              <path d="M33 2.500L43.500 13L15.500 41L5 30.500Z" fill="currentColor" />
              <path d="M6 32L1.500 44.500L14 40.500Z" fill="#fff" stroke="currentColor" strokeWidth="2.400" />
            </svg>
          </IconButton>
        </TitleRow>

        <NoteLink href="#note">메모 추가</NoteLink>

        <Chips>
          <Chip $size={29} $line={32}>10K</Chip>
          <Chip $size={26} $line={36}>최장 러닝</Chip>
        </Chips>

        <Distance>
          <DistanceValue>
            <span>
              12.90<Unit> km</Unit>
            </span>
          </DistanceValue>
          <DistanceCaption>거리</DistanceCaption>
        </Distance>

        <Stats>
          {stats.map((stat) => (
            <Stat key={stat.caption}>
              <Value>
                <span>
                  {stat.value}
                  {stat.unit && <Unit> {stat.unit}</Unit>}
                </span>
                {stat.trend && (
                  <TrendButton type="button" aria-label={`${stat.caption} 그래프`}>
                    <TrendIcon />
                  </TrendButton>
                )}
              </Value>
              <Caption>{stat.caption}</Caption>
            </Stat>
          ))}
        </Stats>
      </Details>
    </>
  );
}
